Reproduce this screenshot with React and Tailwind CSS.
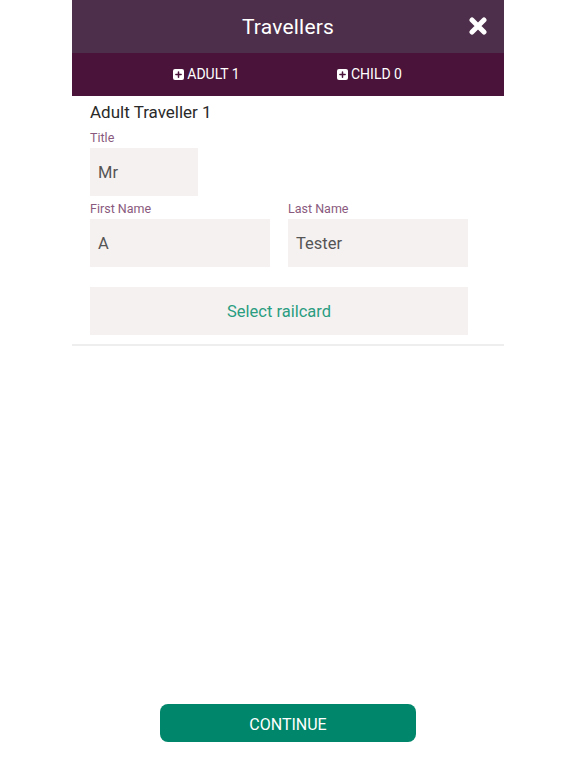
import { Plus } from 'lucide-react';

function PlusBox() {
  return (
    <span className="w-[11px] h-[11px] bg-white rounded-[2px] flex items-center justify-center">
      <Plus className="w-[9px] h-[9px] text-[#4a1339]" strokeWidth={4} />
    </span>
  );
}

function Field({ label, value, width }) {
  return (
    <div className={width}>
      <div className="text-[12.5px] text-[#8a5a7e] leading-[16px] h-[16px] mb-[2px]">{label}</div>
      <div className="h-[48px] bg-[#f5f1f1] flex items-center px-[8px] pt-[2px] text-[16.5px] text-[#555]">{value}</div>
    </div>
  );
}

export default function App() {
  return (
    <div className="w-[576px] h-[768px] bg-white relative font-['Roboto',sans-serif]">
      <div className="w-[432px] mx-auto">
        <div className="h-[53px] bg-[#4e2f4b] flex items-center justify-center relative pt-[3px]">
          <span className="text-white text-[21px] tracking-[0.2px]">Travellers</span>
          <svg className="absolute right-[17px] top-[17px]" width="18" height="18" viewBox="0 0 18 18">
            <path d="M3 3 L15 15 M15 3 L3 15" stroke="white" strokeWidth="5" strokeLinecap="round" />
          </svg>
        </div>
        <div className="h-[43px] bg-[#4a1339] flex justify-center">
          <div className="w-[163px] flex items-center justify-center gap-[3px] text-white text-[14px]">
            <PlusBox />
            <span>ADULT 1</span>
          </div>
          <div className="w-[163px] flex items-center justify-center gap-[3px] text-white text-[14px]">
            <PlusBox />
            <span>CHILD 0</span>
          </div>
        </div>
        <div className="px-[18px] pt-[6px] pb-[9px] border-b-2 border-[#efeeee]">
          <div className="text-[17px] text-[#2a2a2a] leading-[20px]">Adult Traveller 1</div>
          <div className="mt-[8px]">
            <Field label="Title" value="Mr" width="w-[108px]" />
          </div>
          <div className="mt-[5px] flex gap-[18px]">
            <Field label="First Name" value="A" width="w-[180px]" />
            <Field label="Last Name" value="Tester" width="w-[180px]" />
          </div>
          <div className="mt-[20px] w-[378px] h-[48px] bg-[#f5f1f1] flex items-center justify-center pt-[2px] text-[16.5px] text-[#2a9d80]">
            Select railcard
          </div>
        </div>
      </div>
      <div className="absolute left-0 right-0 top-[704px] flex justify-center">
        <div className="w-[256px] h-[38px] rounded-[8px] bg-[#00866a] flex items-center justify-center pt-[3px] text-white text-[16px]">
          CONTINUE
        </div>
      </div>
    </div>
  );
}
